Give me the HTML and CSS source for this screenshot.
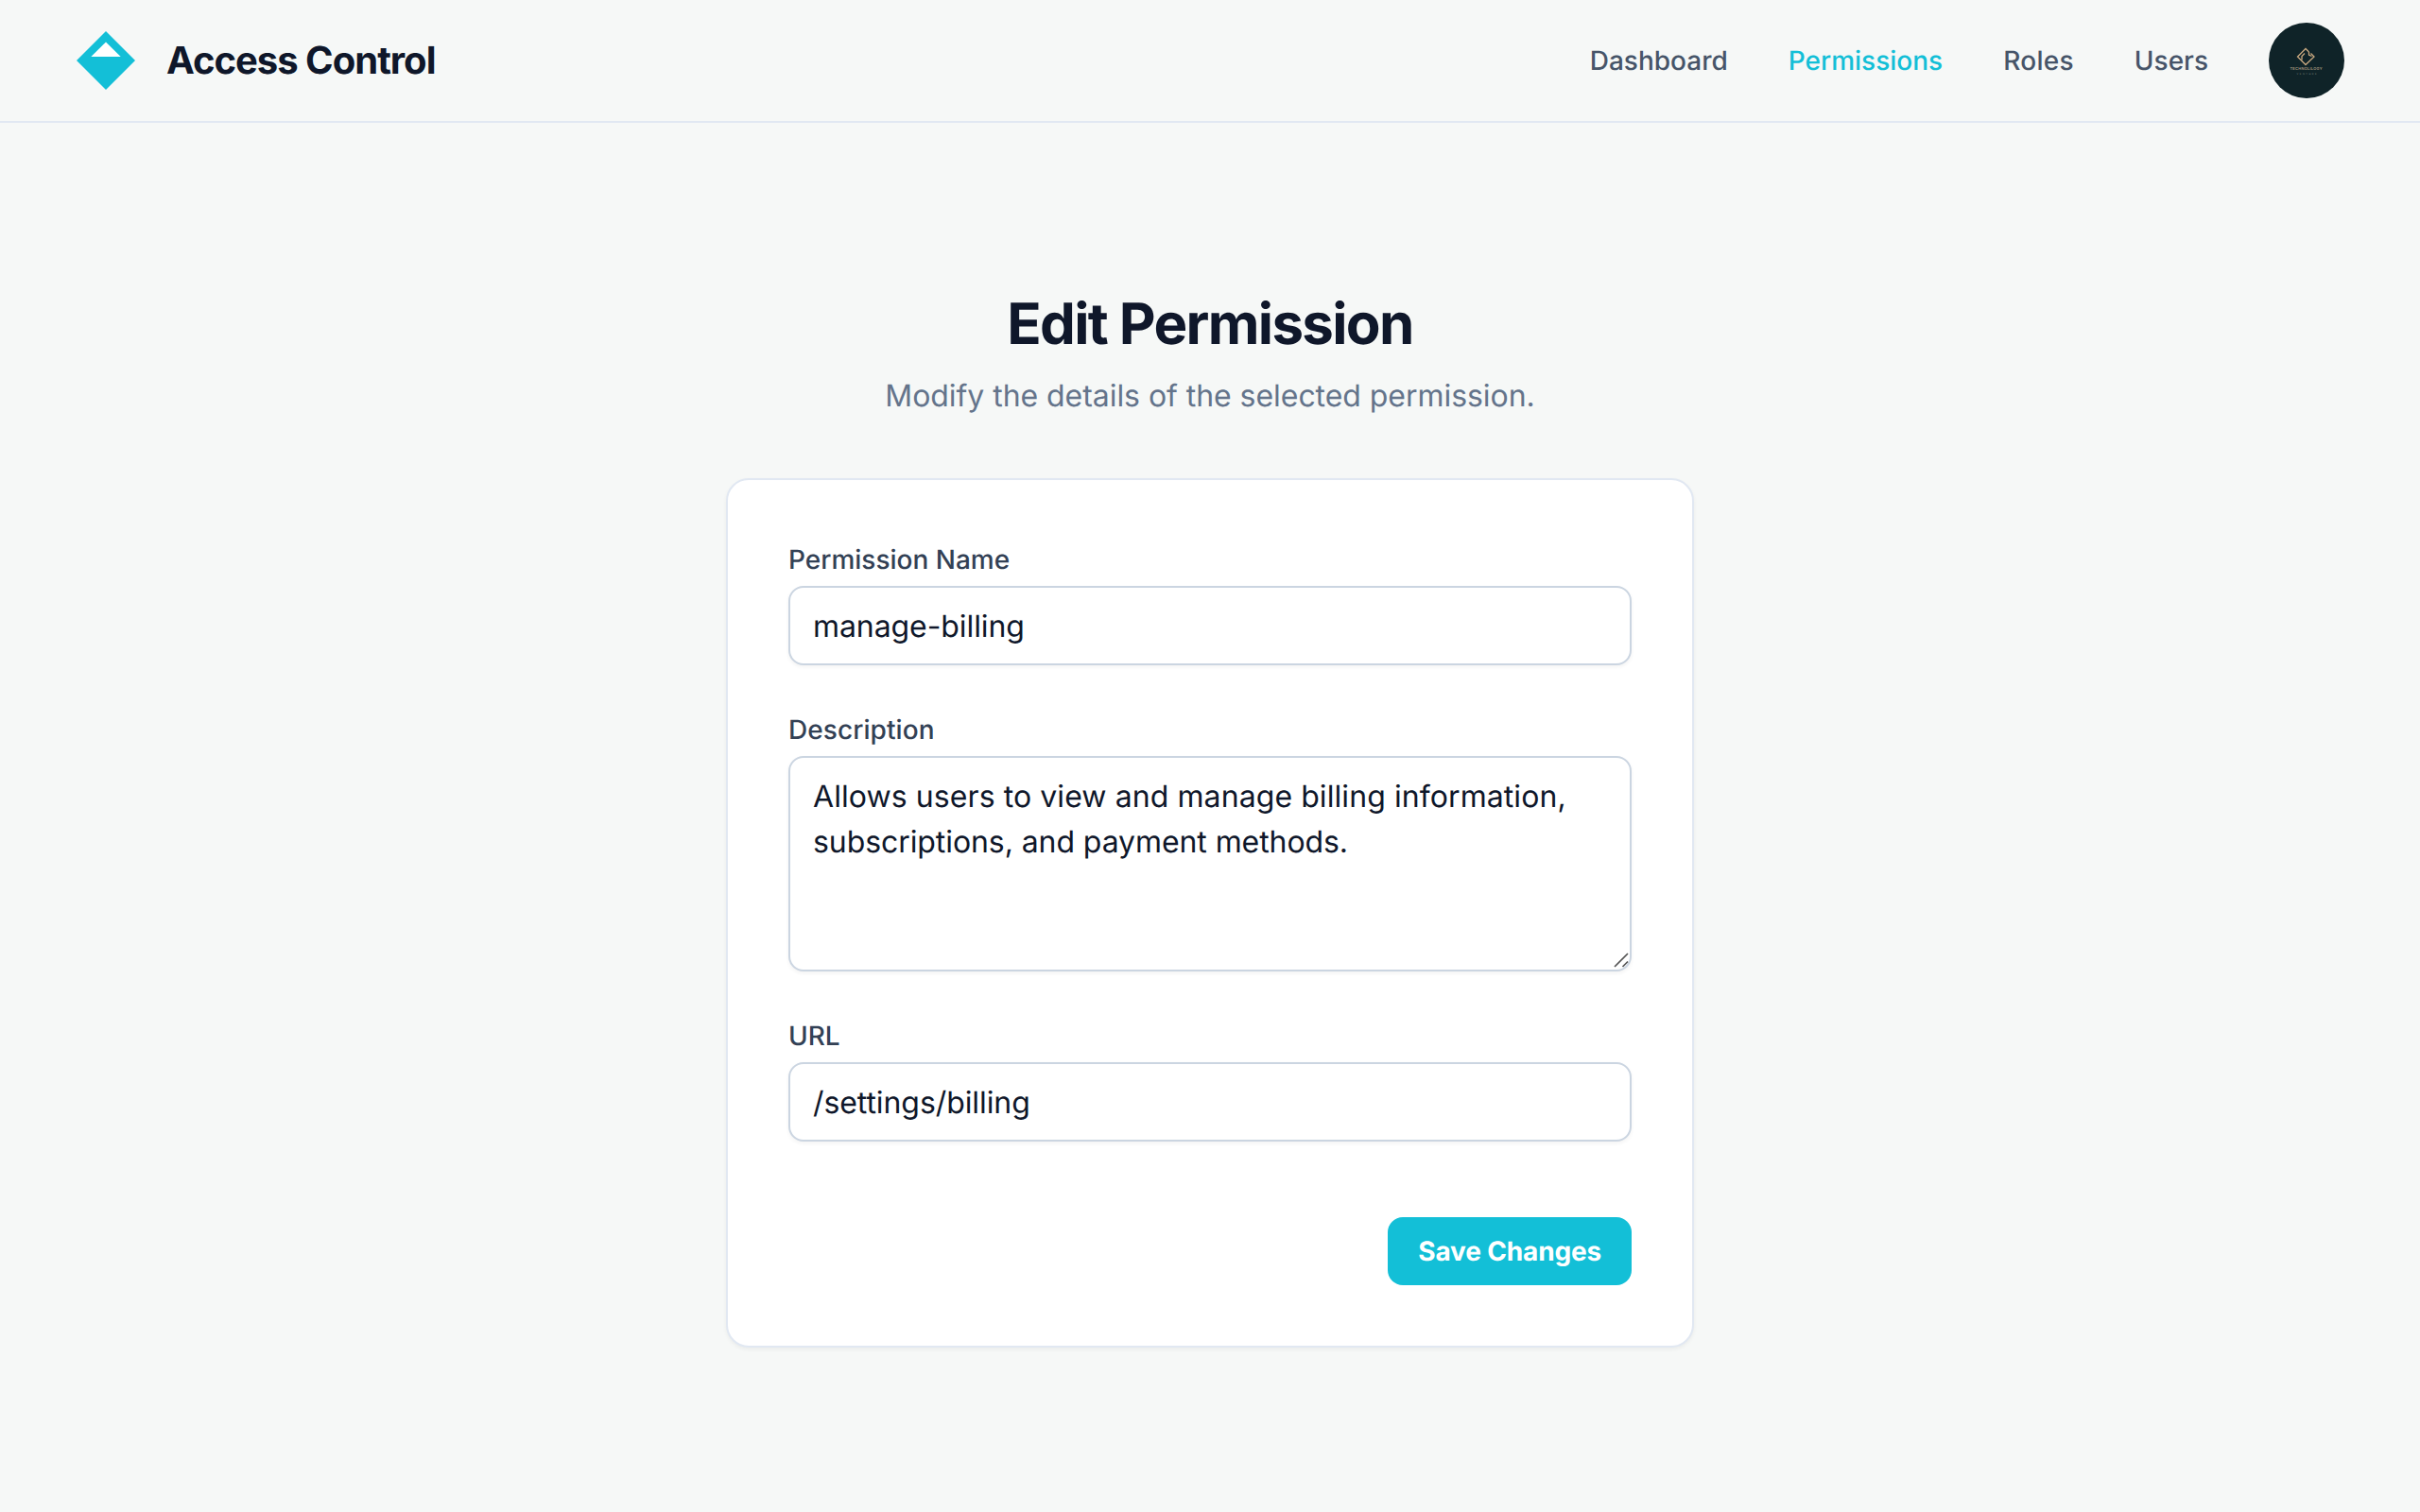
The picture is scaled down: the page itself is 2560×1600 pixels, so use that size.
FILE: index.html
```html
<!DOCTYPE html>
<html lang="en">
<head>
<meta charset="utf-8">
<title>Access Control</title>
<link rel="stylesheet" href="styles.css">
</head>
<body>
<header class="header">
  <div class="brand">
    <svg class="brand-icon" viewBox="0 0 64 64" aria-hidden="true">
      <path fill="#13bfd7" d="M32 1 63 32 32 63 1 32Z"/>
      <path fill="#fff" d="M32 12.500 47.700 28H16.300Z"/>
    </svg>
    <span class="brand-name">Access Control</span>
  </div>
  <nav class="nav">
    <a class="nav-link">Dashboard</a>
    <a class="nav-link nav-link-active">Permissions</a>
    <a class="nav-link nav-link-roles">Roles</a>
    <a class="nav-link">Users</a>
    <svg class="avatar" viewBox="0 0 80 80" aria-hidden="true">
      <circle cx="40" cy="40" r="40" fill="#0f2328"/>
      <g fill="none" stroke="#c9a980" stroke-width="1.3">
        <path d="M42.500 31 39 27.500 30.500 36 39 44.500 48 36 44.500 32.500"/>
        <path d="M42.500 31v3l3 1.500M38 32.500l-3 3v4"/>
      </g>
      <text class="avatar-title" x="39.500" y="50" textLength="34">TECHNOLILOGY</text>
      <text class="avatar-subtitle" x="40" y="54.500" textLength="21">VENTURE</text>
    </svg>
  </nav>
</header>
<main class="main">
  <div class="intro">
    <h1 class="title">Edit Permission</h1>
    <p class="subtitle">Modify the details of the selected permission.</p>
  </div>
  <form class="card">
    <div class="field">
      <label class="label" for="name">Permission Name</label>
      <input class="control" id="name" type="text" value="manage-billing">
    </div>
    <div class="field">
      <span class="label label-description" id="description-label">Description</span>
      <div class="textarea-wrap">
        <div class="control textarea" role="textbox" aria-multiline="true" aria-labelledby="description-label" contenteditable="true" spellcheck="false">Allows users to view and manage billing information, subscriptions, and payment methods.</div>
        <svg class="grip" viewBox="0 0 16 16" aria-hidden="true"><path d="M1 15 15 1M9.500 15 15 9.500"/></svg>
      </div>
    </div>
    <div class="field">
      <label class="label" for="url">URL</label>
      <input class="control" id="url" type="text" value="/settings/billing">
    </div>
    <div class="actions">
      <button class="button" type="button">Save Changes</button>
    </div>
  </form>
</main>
</body>
</html>
```
FILE: styles.css
```css
* {
  box-sizing: border-box;
}

body {
  margin: 0;
  min-height: 100vh;
  display: flex;
  flex-direction: column;
  background: #f6f8f7;
  color: #0f172a;
  font-family: Inter, "Liberation Sans", sans-serif;
  text-rendering: geometricPrecision;
}

.header {
  display: flex;
  align-items: center;
  justify-content: space-between;
  padding: 24px 80px;
  border-bottom: 2px solid #e1e8f2;
}

.brand {
  display: flex;
  align-items: center;
  gap: 32px;
}

.brand-icon {
  width: 64px;
  height: 64px;
}

.brand-name {
  font-size: 40px;
  line-height: 50px;
  font-weight: 700;
  letter-spacing: -1px;
}

.nav {
  display: flex;
  align-items: center;
  gap: 64px;
}

.nav-link {
  color: #475569;
  font-size: 28px;
  line-height: 40px;
  font-weight: 500;
}

.nav-link-active {
  color: #13bfd7;
}

.nav-link-roles {
  letter-spacing: 0.28px;
}

.avatar {
  width: 80px;
  height: 80px;
}

.avatar-title,
.avatar-subtitle {
  fill: #a8997f;
  font-size: 4px;
  font-weight: 600;
  text-anchor: middle;
}

.avatar-subtitle {
  fill: #65706b;
  font-size: 2.5px;
}

.main {
  flex: 1;
  display: flex;
  flex-direction: column;
  align-items: center;
  padding-top: 177px;
}

.intro {
  margin-bottom: 63px;
  text-align: center;
}

.title {
  margin: 0;
  font-size: 60px;
  line-height: 72px;
  font-weight: 700;
  letter-spacing: -1.66px;
}

.subtitle {
  margin: 16px 0 0;
  color: #64748b;
  font-size: 32px;
  line-height: 48px;
  letter-spacing: -0.05px;
}

.card {
  width: 1024px;
  padding: 64px;
  display: flex;
  flex-direction: column;
  gap: 48px;
  background: #fff;
  border: 2px solid #e1e8f2;
  border-radius: 24px;
  box-shadow: 0 2px 4px rgba(0, 0, 0, 0.05);
}

.field {
  display: flex;
  flex-direction: column;
  gap: 8px;
}

.label {
  color: #334155;
  font-size: 28px;
  line-height: 40px;
  font-weight: 500;
}

.label-description {
  letter-spacing: 0.08px;
}

.control {
  display: block;
  width: 100%;
  height: 84px;
  margin: 0;
  padding: 16px 24px;
  border: 2px solid #cbd5e1;
  border-radius: 16px;
  background: #fff;
  color: #0f172a;
  font: 400 32px/48px Inter, "Liberation Sans", sans-serif;
  letter-spacing: -0.08px;
  text-rendering: geometricPrecision;
  box-shadow: 0 2px 4px rgba(0, 0, 0, 0.05);
  outline: none;
}

.textarea-wrap {
  position: relative;
}

.textarea {
  height: 228px;
  padding-top: 17px;
  overflow: hidden;
}

.textarea::first-line {
  letter-spacing: 0.08px;
}

.grip {
  position: absolute;
  right: 3px;
  bottom: 4px;
  width: 16px;
  height: 16px;
  fill: none;
  stroke: #555;
  stroke-width: 1.7;
}

.actions {
  display: flex;
  justify-content: flex-end;
  padding-top: 32px;
}

.button {
  padding: 16px 32px;
  border: 0;
  border-radius: 16px;
  background: #13bfd7;
  color: #fff;
  font: 700 28px/40px Inter, "Liberation Sans", sans-serif;
  letter-spacing: -0.16px;
  text-rendering: geometricPrecision;
}
```
